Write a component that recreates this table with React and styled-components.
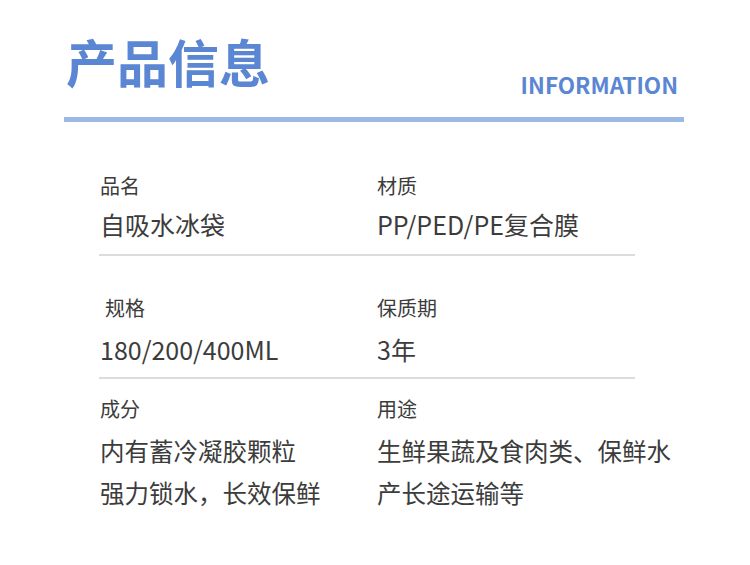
import React from 'react'
import styled, { createGlobalStyle } from 'styled-components'

const Global = createGlobalStyle`
  html, body { margin: 0; padding: 0; background: #fff; }
  body { font-family: "Noto Sans CJK SC", "Noto Sans", sans-serif; }
`

const Page = styled.div`
  width: 750px;
  height: 565px;
  overflow: hidden;
  background: #fff;
  padding-top: 36px;
  box-sizing: border-box;
`

const Header = styled.div`
  width: 620px;
  margin-left: 64px;
  display: flex;
  justify-content: space-between;
  align-items: flex-end;
  padding-bottom: 22px;
  border-bottom: 5px solid #9cb8e4;
`

const Title = styled.h1`
  margin: 0 0 8px 2px;
  font-size: 51px;
  line-height: 1;
  font-weight: 700;
  color: #5b86d3;
`

const Sub = styled.div`
  margin-right: 6px;
  font-size: 22.5px;
  line-height: 1;
  font-weight: 700;
  color: #5b86d3;
`

const Table = styled.div`
  width: 536px;
  margin-left: 99px;
`

const Row = styled.div`
  display: grid;
  grid-template-columns: 277px 1fr;
  padding-top: ${p => p.$pt}px;
  padding-bottom: ${p => p.$pb}px;
  border-bottom: ${p => (p.$line ? '2px solid #dcdcdc' : 'none')};
`

const Cell = styled.div`
  display: flex;
  flex-direction: column;
  gap: ${p => p.$gap}px;
`

const Label = styled.div`
  font-size: 20px;
  line-height: 27px;
  color: #3c3c3c;
  padding-left: ${p => p.$indent || 1}px;
`

const Value = styled.div`
  font-size: ${p => p.$size}px;
  line-height: 42px;
  color: #3c3c3c;
  padding-left: 1px;
  white-space: nowrap;
`

const rows = [
  {
    pt: 50, pb: 9, gap: 4, size: 25, line: true,
    cells: [
      { label: '品名', lines: ['自吸水冰袋'] },
      { label: '材质', lines: ['PP/PED/PE复合膜'] },
    ],
  },
  {
    pt: 38, pb: 7, gap: 7, size: 25, line: true,
    cells: [
      { label: '规格', indent: 6, lines: ['180/200/400ML'] },
      { label: '保质期', lines: ['3年'] },
    ],
  },
  {
    pt: 16, pb: 0, gap: 8, size: 24.5, line: false,
    cells: [
      { label: '成分', lines: ['内有蓄冷凝胶颗粒', '强力锁水，长效保鲜'] },
      { label: '用途', lines: ['生鲜果蔬及食肉类、保鲜水', '产长途运输等'] },
    ],
  },
]

export default function App() {
  return (
    <Page>
      <Global />
      <Header>
        <Title>产品信息</Title>
        <Sub>INFORMATION</Sub>
      </Header>
      <Table>
        {rows.map((r, i) => (
          <Row key={i} $pt={r.pt} $pb={r.pb} $line={r.line}>
            {r.cells.map((c, j) => (
              <Cell key={j} $gap={r.gap}>
                <Label $indent={c.indent}>{c.label}</Label>
                <div>
                  {c.lines.map((l, k) => (
                    <Value key={k} $size={r.size}>{l}</Value>
                  ))}
                </div>
              </Cell>
            ))}
          </Row>
        ))}
      </Table>
    </Page>
  )
}
